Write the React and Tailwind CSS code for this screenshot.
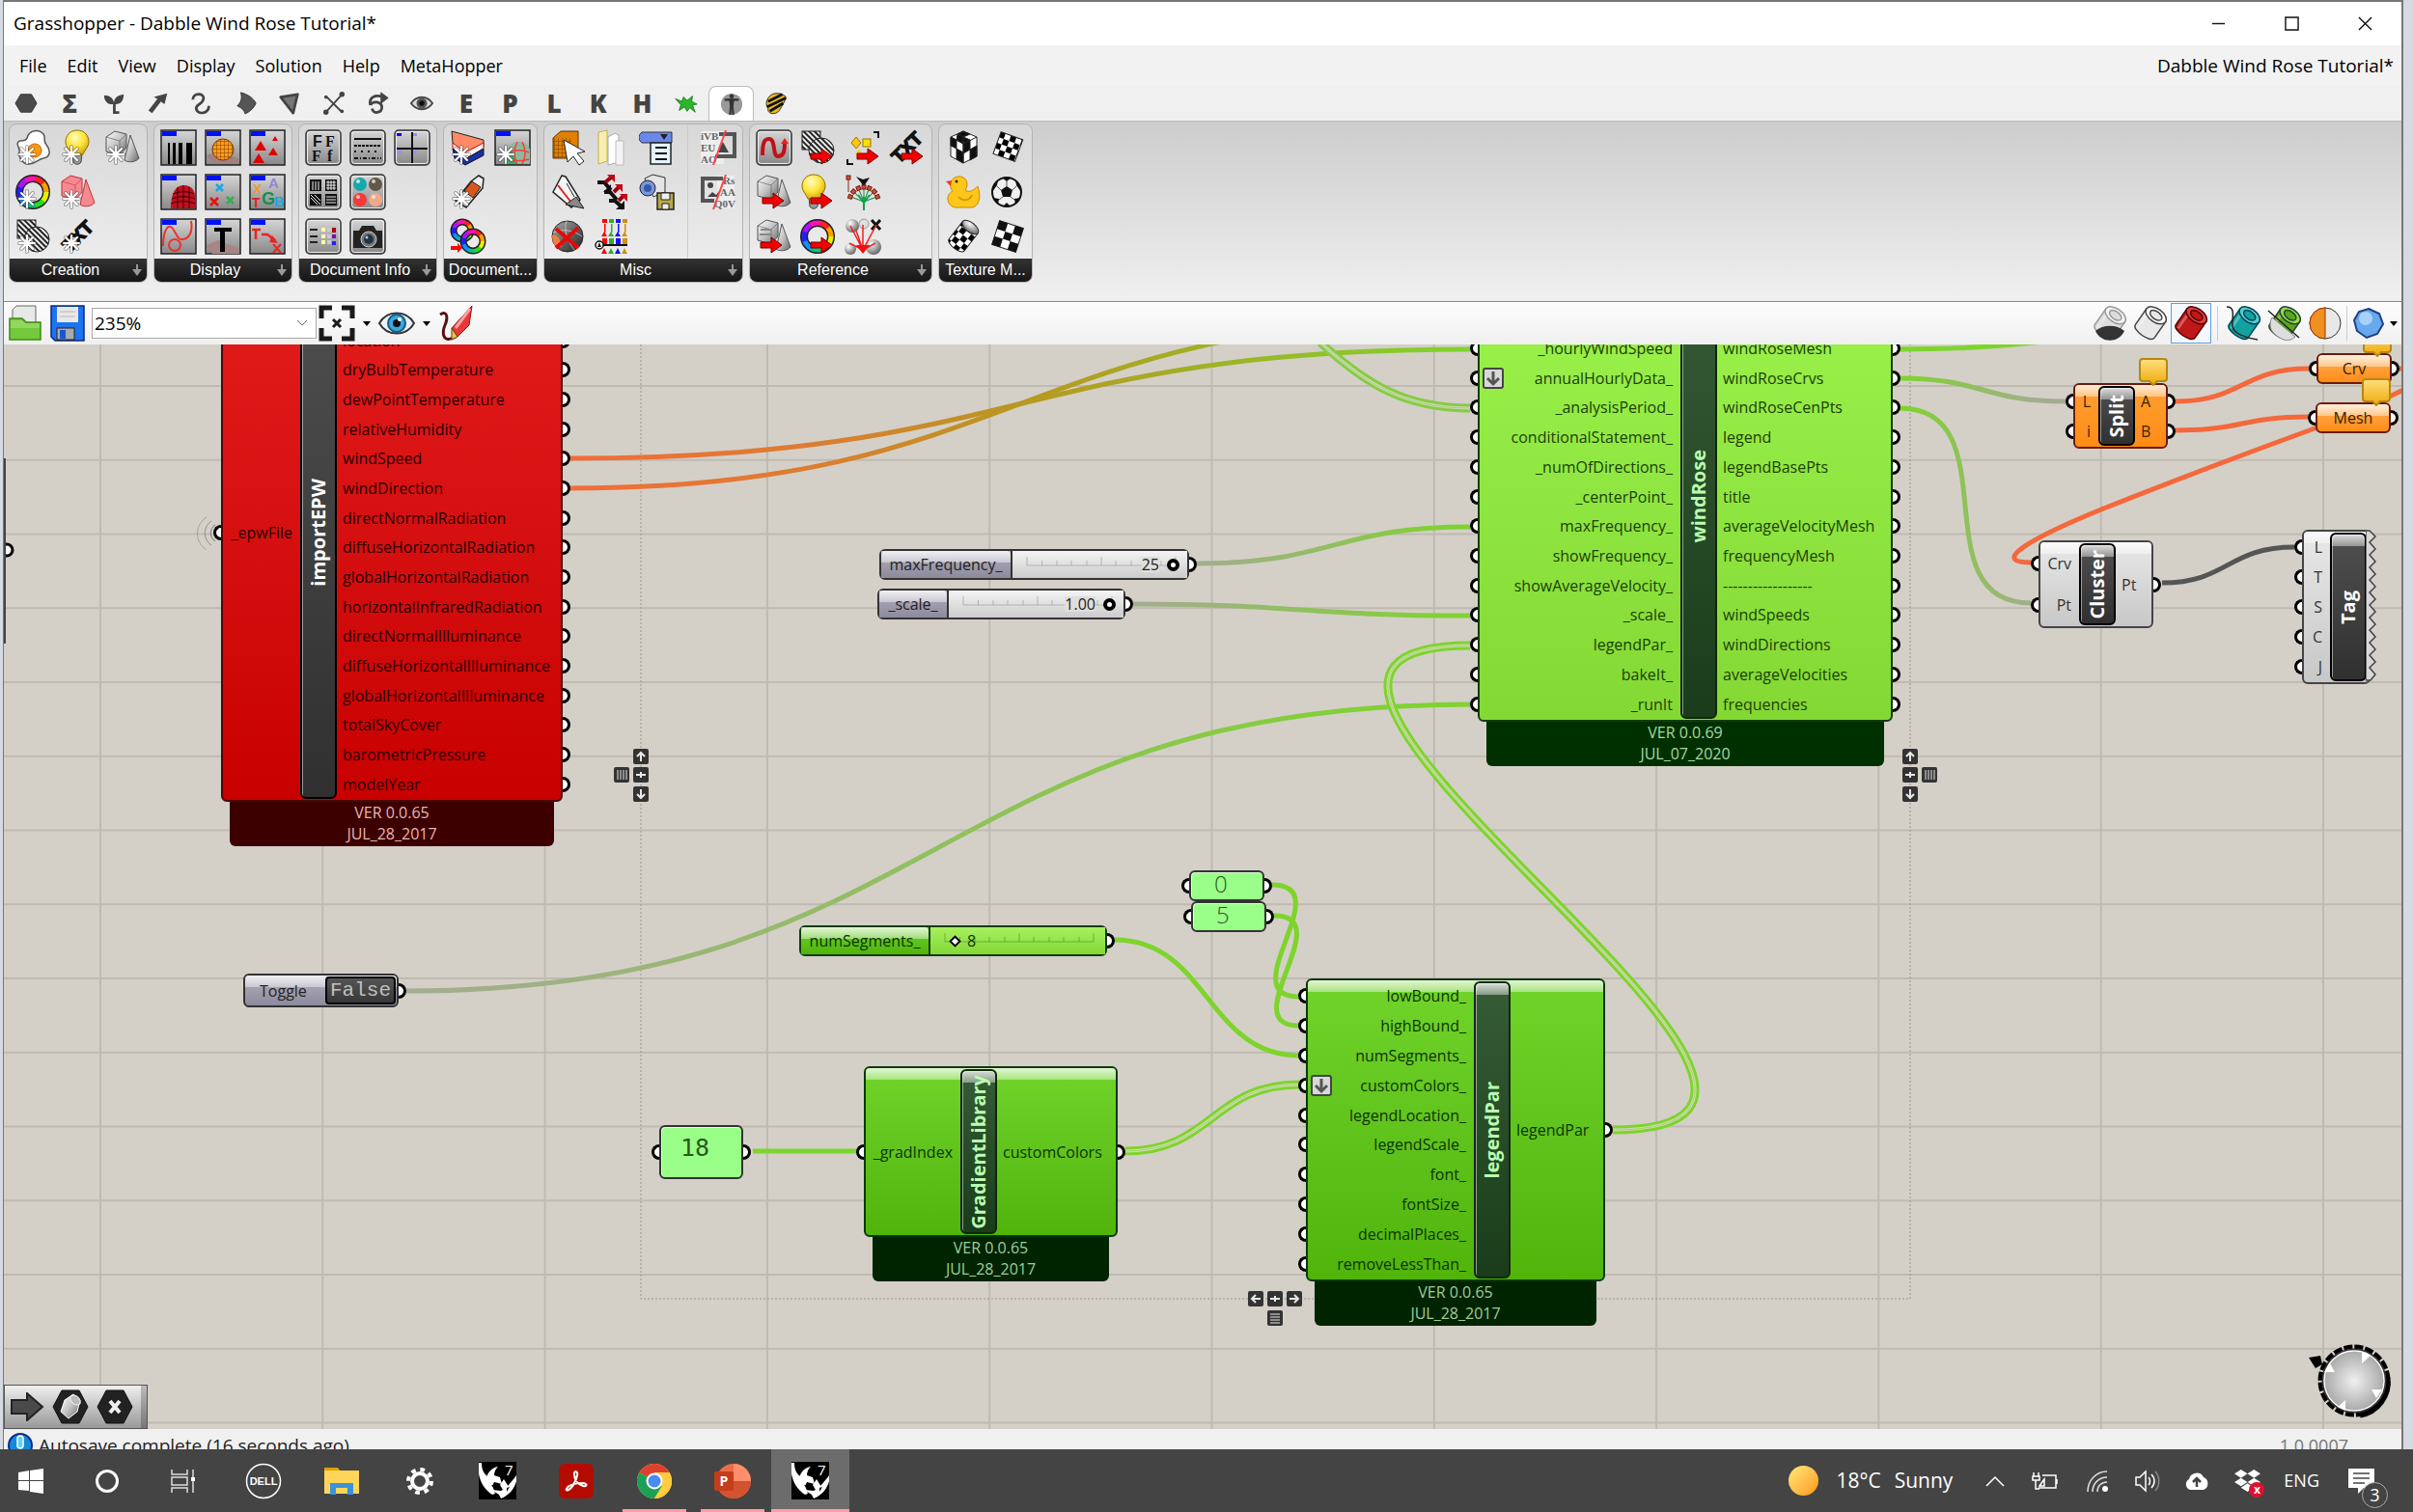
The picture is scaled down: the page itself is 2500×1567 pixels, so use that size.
import { useState } from "react";
import { FaDropbox } from "react-icons/fa";

const UI = "font-['Open_Sans','Noto_Sans',sans-serif]";

/* ---------- shared drawing bits ---------- */

function SharedDefs() {
  return (
    <svg width="0" height="0" className="absolute" aria-hidden="true">
      <defs>
        <linearGradient id="metal" x1="0" y1="0" x2="1" y2="1">
          <stop offset="0" stopColor="#ffffff" />
          <stop offset="0.5" stopColor="#c4c4c4" />
          <stop offset="1" stopColor="#666666" />
        </linearGradient>
        <linearGradient id="tile" x1="0" y1="0" x2="0" y2="1">
          <stop offset="0" stopColor="#d6d6d6" />
          <stop offset="1" stopColor="#888888" />
        </linearGradient>
        <linearGradient id="dark" x1="0" y1="0" x2="1" y2="1">
          <stop offset="0" stopColor="#aaaaaa" />
          <stop offset="1" stopColor="#222222" />
        </linearGradient>
        <radialGradient id="bulb" cx="0.4" cy="0.3" r="0.8">
          <stop offset="0" stopColor="#fffbc0" />
          <stop offset="0.5" stopColor="#ffe53b" />
          <stop offset="1" stopColor="#c99a00" />
        </radialGradient>
        <radialGradient id="ball" cx="0.35" cy="0.3" r="0.8">
          <stop offset="0" stopColor="#ffffff" />
          <stop offset="1" stopColor="#555555" />
        </radialGradient>
        <pattern id="hatch" width="4" height="4" patternUnits="userSpaceOnUse" patternTransform="rotate(-45)">
          <rect width="4" height="4" fill="#eeeeee" />
          <rect width="2" height="4" fill="#222222" />
        </pattern>
        <pattern id="checker" width="12" height="12" patternUnits="userSpaceOnUse">
          <rect width="12" height="12" fill="#ffffff" />
          <rect width="6" height="6" fill="#000000" />
          <rect x="6" y="6" width="6" height="6" fill="#000000" />
        </pattern>
        <pattern id="mesh" width="4" height="4" patternUnits="userSpaceOnUse">
          <path d="M0 0h4M0 0v4" stroke="#7a3c00" strokeWidth="1" />
        </pattern>
      </defs>
    </svg>
  );
}

const Spark = () => (
  <g fill="none" strokeLinecap="round">
    <path d="M12 18v17M4 26h16M6 20l12 12M18 20L6 32" stroke="#444" strokeWidth="4" opacity="0.45" />
    <path d="M12 18v17M4 26h16M6 20l12 12M18 20L6 32" stroke="#fff" strokeWidth="2" />
  </g>
);

const RedArrow = ({ x = 0 }) => (
  <path transform={`translate(${x} 0)`} d="M11 25h11v-5l11 8-11 8v-5H11z" fill="#f50000" stroke="#700" />
);

const Tile = ({ children }) => (
  <g>
    <rect x="1" y="1" width="36" height="36" fill="url(#tile)" stroke="#222" strokeWidth="1.5" />
    {children}
    <rect x="2" y="2" width="15" height="5" fill="#0010ff" />
  </g>
);

const SoftTile = ({ children }) => (
  <g>
    <rect x="1" y="1" width="36" height="36" rx="4" fill="url(#tile)" stroke="#333" strokeWidth="1.5" />
    <rect x="2.5" y="2.5" width="33" height="33" rx="3" fill="none" stroke="#eee" />
    {children}
  </g>
);

const Ring = ({ cx = 18, cy = 19, r = 14, w = 6 }) => {
  const colors = ["#ff2020", "#ffa000", "#e8f000", "#20e020", "#10c080", "#1090ff", "#2020ff", "#b010ff", "#ff10b0"];
  const c = 2 * Math.PI * r;
  const seg = c / colors.length;
  return (
    <g fill="none">
      <circle cx={cx} cy={cy} r={r} stroke="#222" strokeWidth={w + 2} />
      {colors.map((color, i) => (
        <circle
          key={color}
          cx={cx}
          cy={cy}
          r={r}
          stroke={color}
          strokeWidth={w - 1}
          strokeDasharray={`${seg + 0.6} ${c}`}
          transform={`rotate(${i * 40 - 80} ${cx} ${cy})`}
        />
      ))}
    </g>
  );
};

const Solids = ({ tint = "url(#metal)", edge = "#555" }) => (
  <g stroke={edge} strokeLinejoin="round">
    <path d="M27 6l9 24c-3 4-11 5-15 2z" fill={tint} />
    <path d="M2 8l9-6 12 3v14l-7 8-14-4z" fill={tint} />
    <path d="M2 8l14 4 7-7M16 12v15" fill="none" opacity="0.6" />
  </g>
);

const Bulb = () => (
  <g>
    <path d="M13 24h10l-1 10c-2 3-6 3-8 0z" fill="#999" stroke="#444" />
    <path d="M18 1c8 0 12 6 12 12 0 5-4 8-6 13H12C10 21 6 18 6 13 6 7 10 1 18 1z" fill="url(#bulb)" stroke="#8a7000" />
  </g>
);

const TiltText = () => (
  <text
    x="19"
    y="25"
    transform="rotate(-45 19 19)"
    textAnchor="middle"
    fontSize="19"
    fontWeight="700"
    fontFamily="Liberation Sans"
    fill="#111"
    stroke="#111"
    strokeWidth="1.5"
  >
    TXT
  </text>
);

const Hatched = () => (
  <g stroke="#222">
    <rect x="2" y="2" width="19" height="19" fill="url(#hatch)" />
    <circle cx="22" cy="22" r="13" fill="url(#hatch)" />
  </g>
);

/* ---------- ribbon icons ---------- */

const GLYPHS = {
  egg: (
    <>
      <path d="M12 9c2-8 12-10 17-4 3 4-1 6 3 11 5 6 4 13-3 14-6 1-8 6-15 6S3 29 4 23c1-4-4-7-1-10 2-3 7 1 9-4z" fill="#fff" stroke="#555" strokeWidth="1.5" />
      <circle cx="20" cy="22" r="7" fill="#ff9a10" stroke="#d06000" />
      <Spark />
    </>
  ),
  bulbNew: (<><Bulb /><Spark /></>),
  solidsNew: (<><Solids /><Spark /></>),
  ringNew: (<><Ring /><Spark /></>),
  pinkNew: (<><Solids tint="#f48a90" edge="#c03038" /><Spark /></>),
  hatchNew: (<><Hatched /><Spark /></>),
  textNew: (<><TiltText /><Spark /></>),
  bars: (
    <Tile>
      <path d="M8 14h2v22H8zM13 14h3v22h-3zM19 14h4v22h-4zM27 14h6v22h-6z" fill="#000" />
    </Tile>
  ),
  sphere: (
    <Tile>
      <path d="M2 27l14-5 20 9v5H9z" fill="#a08080" />
      <circle cx="19" cy="21" r="11" fill="#ff9d1a" stroke="#7a3c00" />
      <circle cx="19" cy="21" r="11" fill="url(#mesh)" />
    </Tile>
  ),
  triangles: (
    <Tile>
      <path d="M12 12l6 10H6zM27 7l3 5h-6zM25 19l5 8H20zM10 25l6 10H4z" fill="#e00000" />
    </Tile>
  ),
  dome: (
    <Tile>
      <path d="M11 36c0-16 5-24 13-24 9 0 12 6 12 12v12z" fill="#c01020" />
      <path d="M13 21c8-3 16-3 22 0M12 26c8-3 16-3 24 0M11 31c8-3 17-3 25 0M18 14v22M24 12v24M30 14v22" stroke="#400" fill="none" />
    </Tile>
  ),
  crosses: (
    <Tile>
      <g strokeWidth="2.5" fill="none">
        <path d="M12 11l7 7M19 11l-7 7" stroke="#18a8f0" />
        <path d="M6 25l8 8M14 25l-8 8" stroke="#e81010" />
        <path d="M23 24l7 7M30 24l-7 7" stroke="#30b050" />
      </g>
    </Tile>
  ),
  letters: (
    <Tile>
      <g fontFamily="Liberation Sans" fontWeight="700">
        <text x="4" y="21" fontSize="14" fill="#f09a30">X</text>
        <text x="20" y="15" fontSize="15" fill="#9088d0">A</text>
        <text x="3" y="35" fontSize="14" fill="#e02020">T</text>
        <text x="13" y="32" fontSize="18" fill="#109050">G</text>
        <text x="26" y="34" fontSize="14" fill="#18a8f0">B</text>
      </g>
    </Tile>
  ),
  curve: (
    <Tile>
      <path d="M3 29C3 14 8 4 13 11s5 12 11 11 10-8 8-19" fill="none" stroke="#f03030" strokeWidth="2" />
      <circle cx="15" cy="28" r="6" fill="none" stroke="#f03030" strokeWidth="2" />
    </Tile>
  ),
  bigT: (
    <Tile>
      <path d="M2 28l12-5 22 9v5H8z" fill="#a88484" />
      <path d="M10 10h18v4h-7v21h-5V14h-6z" fill="#000" />
    </Tile>
  ),
  textLink: (
    <Tile>
      <path d="M3 12h9M7 12v10M13 17h6l8 6" stroke="#f02020" strokeWidth="2.5" fill="none" />
      <path d="M24 18l6 8-9-1z" fill="#f02020" />
      <path d="M25 27l8 9M33 27l-8 9" stroke="#f02020" strokeWidth="2" />
    </Tile>
  ),
  fonts: (
    <SoftTile>
      <g fontWeight="700" fill="#111" fontSize="16">
        <text x="8" y="18" fontFamily="Liberation Sans">F</text>
        <text x="21" y="18" fontFamily="Liberation Serif">F</text>
        <text x="7" y="33" fontFamily="Liberation Serif">F</text>
        <text x="23" y="33" fontFamily="Liberation Serif">f</text>
      </g>
    </SoftTile>
  ),
  lines: (
    <SoftTile>
      <g stroke="#111" strokeWidth="2">
        <path d="M5 10h28" />
        <path d="M5 17h28" strokeDasharray="3 1" />
        <path d="M5 23h28" strokeDasharray="2 5" />
        <path d="M5 30h28" strokeDasharray="4 2 1 2" />
      </g>
    </SoftTile>
  ),
  axes: (
    <SoftTile>
      <path d="M19 3v32M3 20h32" stroke="#111" strokeWidth="2" />
      <path d="M3 4h5v3H3z" fill="#00f" />
      <path d="M20 4h4v3h-4zM3 22h5v3H3zM20 22h4v3h-4z" fill="#9090ff" />
    </SoftTile>
  ),
  patterns: (
    <SoftTile>
      <path d="M5 6h12v12H5zM21 6h12v12H21zM5 21h12v12H5zM21 21h12v12H21z" fill="#111" />
      <path d="M8 8v9M11 8v9M14 8v9M22 9h10M22 12h10M22 15h10M24 7v10M27 7v10M30 7v10M22 24h10M22 27h10M22 30h10M6 25l7 7M6 22l10 10M10 22l6 6" stroke="#eee" />
    </SoftTile>
  ),
  materials: (
    <SoftTile>
      <circle cx="11" cy="11" r="7" fill="#18a8a8" /><circle cx="27" cy="11" r="7" fill="#625848" />
      <circle cx="11" cy="27" r="7" fill="#f83838" /><circle cx="27" cy="27" r="7" fill="#f0a888" />
      <g fill="#fff" opacity="0.7"><circle cx="9" cy="8" r="2" /><circle cx="25" cy="8" r="2" /><circle cx="9" cy="24" r="2" /><circle cx="25" cy="24" r="2" /></g>
    </SoftTile>
  ),
  layers: (
    <SoftTile>
      <path d="M5 12h8M5 19h8M5 25h8" stroke="#222" strokeWidth="2" />
      <path d="M17 10h4v4h-4zM17 17h4v4h-4zM17 23h4v4h-4z" fill="#ffffb0" />
      <path d="M23 10h4v4h-4zM23 17h4v4h-4zM23 23h4v4h-4z" fill="#ccc" />
      <path d="M28 10h4v5h-4z" fill="#b00010" /><path d="M28 17h4v4h-4z" fill="#7010c0" /><path d="M28 24h4v4h-4z" fill="#2020ff" />
    </SoftTile>
  ),
  camera: (
    <SoftTile>
      <path d="M4 13h6l3-5h12l3 5h6v18H4z" fill="#222" />
      <circle cx="20" cy="22" r="8" fill="#777" stroke="#ccc" /><circle cx="20" cy="22" r="5" fill="#234" /><circle cx="18" cy="20" r="1.500" fill="#9cf" />
    </SoftTile>
  ),
  wedge: (
    <>
      <path d="M2 2l33 9v7L16 28 3 14z" fill="#ff8a68" stroke="#222" />
      <path d="M3 14l13 10 19-10v6L16 31 3 20z" fill="#f4f4f4" stroke="#c00" />
      <path d="M3 20l13 11 19-11v7L16 37 5 30z" fill="#1830a0" stroke="#112" />
      <Spark />
    </>
  ),
  globe: (
    <Tile>
      <path d="M12 36c-2-16 5-24 14-23 6 0 10 4 11 8v15z" fill="#8fb89a" />
      <path d="M12 36c-1-9 1-14 5-18l6 18z" fill="#28b070" />
      <path d="M14 24c8-3 16-3 22 0M13 31c8 2 16 2 23 0M24 13c-4 8-4 16 0 23M29 13c4 8 4 16 0 23" stroke="#f04040" fill="none" strokeWidth="1.500" />
      <Spark />
    </Tile>
  ),
  pencil: (
    <>
      <path d="M30 2l5 3-1 10-17 20-11-7L22 8z" fill="#eee" stroke="#222" strokeWidth="1.500" />
      <path d="M23 8l9 6-8 11-9-7z" fill="#d8581c" stroke="#222" />
      <Spark />
    </>
  ),
  rings: (
    <>
      <Ring cx={13} cy={13} r={9} w={5} /><Ring cx={24} cy={24} r={10} w={5} />
      <path d="M1 29h7v-3l5 5-5 5v-3H1z" fill="#f00" />
    </>
  ),
  pick: (
    <>
      <path d="M3 9l8-7h18v20l-7 8H3z" fill="#e08000" stroke="#5a3000" />
      <path d="M3 9h19v21H3z" fill="url(#mesh)" />
      <path d="M14 11l4 23 6-6 6 9 5-4-7-8 8-2z" fill="#fff" stroke="#222" />
    </>
  ),
  folder: (
    <>
      <path d="M4 3l9-2v32l-9 3z" fill="#f8eeb0" stroke="#c8b050" />
      <path d="M14 8l7-4 4 2v28l-11 3z" fill="#fff" stroke="#aaa" /><path d="M22 12h8v25h-8z" fill="#f4f4f4" stroke="#bbb" />
    </>
  ),
  scroll: (
    <>
      <path d="M3 3h31v11H3c-4-3-4-8 0-11z" fill="#6a88e8" stroke="#334" />
      <path d="M22 5h8l-4 6z" fill="#222" />
      <rect x="12" y="14" width="21" height="22" fill="#e4f4fc" stroke="#222" strokeWidth="1.500" />
      <path d="M17 19h12M17 25h12M17 31h12" stroke="#111" strokeWidth="2" />
    </>
  ),
  imageOut: (
    <>
      <path d="M1 2h24v34H1z" fill="#eee" />
      <g fontFamily="Liberation Serif" fontSize="11" fontWeight="700" fill="#666"><text x="1" y="11">iVB</text><text x="1" y="23">EU</text><text x="1" y="35">AO</text></g>
      <path d="M20 5h16v23H16" fill="none" stroke="#555" strokeWidth="4" />
      <path d="M24 13l6 11H18z" fill="#444" /><path d="M27 1L14 37" stroke="#f44" strokeWidth="2" />
    </>
  ),
  imageIn: (
    <>
      <path d="M18 2h18v34H18z" fill="#eee" />
      <g fontFamily="Liberation Serif" fontSize="11" fontWeight="700" fill="#666"><text x="24" y="11">Rs</text><text x="21" y="23">AA</text><text x="15" y="35">Q0V</text></g>
      <path d="M24 5H3v23h12" fill="none" stroke="#555" strokeWidth="4" />
      <circle cx="11" cy="12" r="3" fill="#444" /><path d="M8 24l5-5 4 3 3-4v6z" fill="#444" /><path d="M27 1L14 37" stroke="#f44" strokeWidth="2" />
    </>
  ),
  ruler: (
    <>
      <path d="M12 2l4 1 15 24-9 8L3 19z" fill="#f4f4f4" stroke="#222" strokeWidth="1.500" />
      <path d="M8 12l14 18" stroke="#e02020" strokeWidth="2" />
      <path d="M16 32l11-8 8 12zM25 24l-8-14" fill="#888" stroke="#222" />
    </>
  ),
  arrowsList: (
    <>
      <path d="M3 9h7l7 8M10 19h6l7 8M15 28h6l9 8" stroke="#111" strokeWidth="4" fill="none" />
      <path d="M31 28v9h-9zM17 11v8h-8z" fill="#111" />
      <path d="M11 9l6-5M20 19l5-5M25 28l5-5" stroke="#a00010" strokeWidth="4" />
      <path d="M13 1h8v8zM21 11h8v8zM26 21h8v8z" fill="#c00818" />
    </>
  ),
  cameraSave: (
    <>
      <path d="M6 5l8-4 13 3v15l-12 5z" fill="#e4e4e4" stroke="#333" />
      <circle cx="9" cy="15" r="8" fill="#7898d8" stroke="#223" /><circle cx="9" cy="15" r="4" fill="#3858a8" />
      <rect x="19" y="20" width="17" height="17" fill="#b8a848" stroke="#222" strokeWidth="1.500" /><path d="M23 20h9v7h-9zM24 31h7v6h-7z" fill="#eee" stroke="#222" />
    </>
  ),
  noSphere: (
    <>
      <circle cx="18" cy="19" r="16" fill="url(#dark)" stroke="#222" />
      <path d="M17 3c-3 8 0 20 8 30M3 15c10-4 20-3 30 4" fill="none" stroke="#eee" opacity="0.6" />
      <path d="M2 18c4-2 9 4 10 12L7 30C3 27 2 22 2 18z" fill="#f08040" />
      <path d="M6 11l23 20M29 10L6 31" stroke="#e80808" strokeWidth="4" />
    </>
  ),
  slots: (
    <>
      {[["#f00", 10], ["#3a3", 17], ["#11f", 24], ["#d09010", 31]].map(([color, x]) => (
        <g key={color} fill={color} stroke="none">
          <path d={`M${x - 2} 1h5v4h-5zM${x} 6h1.500v9H${x}zM${x - 2} 21h5v6h-5z`} />
          <path d={`M${x} 14l3 5h-6zM${x} 31l3 6h-6z`} />
        </g>
      ))}
      <path d="M4 28h30" stroke="#111" strokeWidth="2" /><circle cx="5" cy="28" r="4" fill="#fff" stroke="#111" strokeWidth="1.500" /><path d="M5 25l2 5H3z" fill="#111" />
    </>
  ),
  refCurve: (
    <SoftTile>
      <path d="M7 27c0-16 3-17 7-17 7 0 3 18 9 18 6 0 7-5 7-15" stroke="#c01018" strokeWidth="4" fill="none" />
      <path d="M26 15l4-6 4 6z" fill="#f02020" />
    </SoftTile>
  ),
  hatchRef: (<><Hatched /><RedArrow /></>),
  pointsRef: (
    <>
      <path d="M30 3h5v6M3 31v5h6" stroke="#111" strokeWidth="2" fill="none" />
      <path d="M12 8l5 6-5 6-5-6z" fill="#ffc800" stroke="#a07000" /><rect x="19" y="10" width="8" height="8" fill="#ffe000" stroke="#a07000" /><path d="M15 21l4 5h-8z" fill="#ffc800" />
      <RedArrow x={2} />
    </>
  ),
  textRef: (<><TiltText /><RedArrow x={2} /></>),
  solidsRef: (<><Solids /><RedArrow x={-4} /></>),
  bulbRef: (<><g transform="translate(-4 0)"><Bulb /></g><RedArrow /></>),
  flower: (
    <>
      <path d="M4 5v14" stroke="#a06050" strokeWidth="1.500" /><path d="M12 3l7 3 7-2-4 6-2 5-3-6z" fill="#111" />
      {[-70, -46, -22, 0, 22, 46, 70].map((a) => (
        <g key={a} transform={`rotate(${a} 20 29)`}><path d="M20 29V16" stroke="#108840" /><rect x="18" y="12" width="4" height="4" fill="#c06030" stroke="#801010" /></g>
      ))}
      <path d="M20 24v14M14 22l6 8 6-8" stroke="#10a050" strokeWidth="2" fill="none" /><rect x="2" y="2" width="4" height="4" fill="#c06030" stroke="#801010" />
    </>
  ),
  rocksRef: (<><Solids /><path d="M5 12h12M4 17h13" stroke="#888" strokeWidth="2" /><RedArrow x={-6} /></>),
  ringRef: (<><Ring /><RedArrow /></>),
  burst: (
    <>
      <circle cx="8" cy="8" r="7" fill="url(#ball)" /><circle cx="20" cy="6" r="5" fill="#ddd" stroke="#999" /><circle cx="6" cy="32" r="6" fill="url(#ball)" /><circle cx="30" cy="30" r="8" fill="url(#ball)" />
      <path d="M28 2l9 10M37 2l-9 10" stroke="#111" strokeWidth="3" />
      <path d="M19 33L6 8M19 33V7M19 33L33 7M19 33L5 26M19 33l13-7M19 33l-7-20" stroke="#f42020" strokeWidth="1.500" /><path d="M12 28l7 9 7-9z" fill="#f01010" />
    </>
  ),
  cube: (
    <g stroke="#222" strokeLinejoin="round">
      <path d="M19 2l14 6v20l-14 7-13-7V8z" fill="#fff" />
      <path d="M19 2l7 3-7 3-6-3zM12 11l7 4v-7l-6-3zM19 15l7-4-7-3zM6 8l6 3v9l-6-3zM12 20l7 4v11l-7-4zM19 15l7-4v10l-7 4zM26 21l7-4v11l-7 4z" fill="#111" />
      <path d="M6 8l13 7 14-7M19 15v20" fill="none" />
    </g>
  ),
  plane: <path transform="rotate(20 19 19)" d="M7 6h24v24H7z" fill="url(#checker)" stroke="#222" />,
  duck: (
    <>
      <path d="M10 4c6-3 13 0 13 7 0 3-2 5-1 7 5 1 8-1 12-5 4 12 1 21-6 22H11C2 34 0 22 8 18 5 15 4 8 10 4z" fill="#ffc61a" stroke="#c88a00" />
      <path d="M7 7l-6 1 5 5z" fill="#f04010" /><circle cx="12" cy="8" r="1.500" fill="#222" /><path d="M14 24c4 5 12 4 14-2" stroke="#d89800" strokeWidth="2" fill="none" />
    </>
  ),
  football: (
    <>
      <circle cx="18" cy="19" r="15" fill="#f0f0f0" stroke="#111" strokeWidth="2" />
      <path d="M18 13l6 4-2 7h-8l-2-7zM13 4l5 4 5-4zM3 19l5-7 1-5c-4 3-6 8-6 12zM33 19l-5-7-1-5c4 3 6 8 6 12zM9 32l1-6-6-1zM27 32l-1-6 6-1zM14 34h8l-4-4z" fill="#111" />
      <path d="M18 13V8M24 17l4-4M22 24l4 3M14 24l-4 3M12 17l-4-4" stroke="#555" />
    </>
  ),
  cylinder: (
    <g transform="rotate(38 19 19)">
      <path d="M9 7v23c0 6 20 6 20 0V7z" fill="url(#checker)" stroke="#222" /><ellipse cx="19" cy="7" rx="10" ry="5" fill="url(#ball)" stroke="#222" />
    </g>
  ),
  flag: (
    <g transform="rotate(18 19 19)">
      <rect x="6" y="6" width="26" height="26" fill="#fff" stroke="#222" /><path d="M6 6h9v9H6zM23 6h9v9h-9zM15 15h8v8h-8zM6 23h9v9H6zM23 23h9v9h-9z" fill="#111" />
    </g>
  ),
};

function RibbonIcon({ name }) {
  return (
    <button type="button" aria-label={name} className="flex size-[46px] items-center justify-center">
      <svg viewBox="0 0 38 38" className="size-[38px]">
        {GLYPHS[name]}
      </svg>
    </button>
  );
}

const RIBBON = [
  { label: "Creation", cols: "grid-cols-3", more: true, icons: ["egg", "bulbNew", "solidsNew", "ringNew", "pinkNew", null, "hatchNew", "textNew", null] },
  { label: "Display", cols: "grid-cols-3", more: true, icons: ["bars", "sphere", "triangles", "dome", "crosses", "letters", "curve", "bigT", "textLink"] },
  { label: "Document Info", cols: "grid-cols-3", more: true, icons: ["fonts", "lines", "axes", "patterns", "materials", null, "layers", "camera", null] },
  { label: "Document...", cols: "grid-cols-2", icons: ["wedge", "globe", "pencil", null, "rings", null] },
  {
    label: "Misc",
    cols: "grid-cols-3",
    more: true,
    icons: ["pick", "folder", "scroll", "ruler", "arrowsList", "cameraSave", "noSphere", "slots", null],
    extra: ["imageOut", "imageIn"],
  },
  { label: "Reference", cols: "grid-cols-4", more: true, icons: ["refCurve", "hatchRef", "pointsRef", "textRef", "solidsRef", "bulbRef", "flower", null, "rocksRef", "ringRef", "burst", null] },
  { label: "Texture M...", cols: "grid-cols-2", icons: ["cube", "plane", "duck", "football", "cylinder", "flag"] },
];

function RibbonGroup({ group }) {
  return (
    <section className="flex flex-col overflow-hidden rounded-lg border border-[#b4b4b4] bg-linear-to-b from-[#d8d8d8] to-[#f0f0f0]">
      <div className="flex px-[2px] pt-px">
        <div className={`grid ${group.cols} auto-rows-[46px]`}>
          {group.icons.map((name, i) => (name ? <RibbonIcon key={i} name={name} /> : <span key={i} />))}
        </div>
        {group.extra && (
          <div className="ml-2 flex flex-col border-l border-[#ccc] pl-2">
            {group.extra.map((name) => (
              <RibbonIcon key={name} name={name} />
            ))}
          </div>
        )}
      </div>
      <div className="flex h-6 items-center justify-center bg-linear-to-b from-[#333] to-[#161616] font-['Liberation_Sans',sans-serif] text-[16px] whitespace-nowrap text-white">
        <span className="flex-1 text-center">{group.label}</span>
        {group.more && (
          <svg viewBox="0 0 12 14" className="mr-1 h-3.5 w-3">
            <path d="M5 1h2v5h4l-5 7-5-7h4z" fill="#999" />
          </svg>
        )}
      </div>
    </section>
  );
}

/* ---------- category tabs ---------- */

const TABS = [
  { name: "Params", art: <path d="M7 3h12l6 10-6 10H7L1 13z" fill="#4a4a4a" stroke="#333" /> },
  { name: "Maths", letter: "Σ" },
  { name: "Sets", art: <path d="M12 25V14C7 15 2 11 2 4c6 0 10 3 11 8 1-6 5-8 11-9 0 7-3 11-9 11v8h4v3z" fill="#444" /> },
  { name: "Vector", art: <path d="M23 2l-3 12-4-3L6 24l-4-3L12 8 8 6z" fill="#444" /> },
  { name: "Curve", art: <path d="M3 9c0-8 13-8 12-1S5 14 7 20s14 5 14-4" fill="none" stroke="#444" strokeWidth="3" /> },
  { name: "Surface", art: <path d="M7 1c8 2 14 6 17 12-2 5-6 9-12 12-1-4-4-7-9-9 4-4 6-8 4-15z" fill="#555" stroke="#333" /> },
  { name: "Mesh", art: <path d="M3 6l19-3-5 21z" fill="#777" stroke="#444" strokeWidth="3" strokeLinejoin="round" /> },
  {
    name: "Intersect",
    art: (
      <g fill="#444" stroke="#444" strokeWidth="2">
        <path d="M4 5l18 18M22 3L4 23" />
        <circle cx="22" cy="3" r="2" /><circle cx="4" cy="23" r="2" /><circle cx="22" cy="22" r="1" /><circle cx="4" cy="6" r="1" />
      </g>
    ),
  },
  {
    name: "Transform",
    art: (
      <g fill="none" stroke="#444" strokeWidth="3">
        <path d="M4 15C2 6 10 3 18 6" /><path d="M16 1l8 6-8 6z" fill="#444" strokeWidth="1" />
        <path d="M4 15c3-5 12-4 13 2 0 7-10 9-11 2" />
      </g>
    ),
  },
  {
    name: "Preview",
    art: (
      <g>
        <path d="M1 13C7 4 19 4 25 13 19 22 7 22 1 13z" fill="#ddd" stroke="#444" strokeWidth="2" />
        <circle cx="13" cy="13" r="6" fill="#555" /><circle cx="13" cy="13" r="3" fill="#111" />
      </g>
    ),
  },
  { name: "E", letter: "E" },
  { name: "P", letter: "P" },
  { name: "L", letter: "L" },
  { name: "K", letter: "K" },
  { name: "H", letter: "H" },
  { name: "MetaHopper", art: <path d="M1 8l7 3 2-5 4 4 6-5-1 6 6 3-5 1 3 8-6-5-3 4-3-5-6 4 2-6z" fill="#2db52d" stroke="#188018" /> },
  {
    name: "Human",
    art: (
      <g>
        <circle cx="13" cy="13" r="12" fill="#999" />
        <path d="M5 8h16" stroke="#333" strokeWidth="2.500" /><path d="M10 7h6l-1 8 1 10h-2.500L13 16l-.5 9H10l1-10z" fill="#333" /><circle cx="13" cy="4" r="2.500" fill="#333" />
      </g>
    ),
  },
  {
    name: "Bee",
    art: (
      <g>
        <path d="M5 6c4-6 16-5 19 0 0 4-4 9-7 15-5 6-14 4-13-2C1 14 2 10 5 6z" fill="#e8b820" stroke="#222" />
        <path d="M4 11L20 3M3 17L24 7M6 22l15-9" stroke="#111" strokeWidth="3" />
      </g>
    ),
  },
];

function CategoryTabs({ active, onSelect }) {
  return (
    <nav className="flex h-9 w-[823px] bg-[#f0f0f0]">
      {TABS.map((tab) => (
        <button
          key={tab.name}
          type="button"
          aria-label={tab.name}
          onClick={() => onSelect(tab.name)}
          className={`flex flex-1 items-center justify-center rounded-t-lg text-[26px] leading-9 font-extrabold text-[#444] ${
            tab.name === active ? "border border-b-0 border-[#bbb] bg-white" : ""
          }`}
        >
          {tab.letter ?? (
            <svg viewBox="0 0 26 26" className="size-6">
              {tab.art}
            </svg>
          )}
        </button>
      ))}
    </nav>
  );
}

/* ---------- canvas toolbar ---------- */

const Caret = () => (
  <svg viewBox="0 0 8 5" className="h-[5px] w-2">
    <path d="M0 0h8L4 5z" fill="#000" />
  </svg>
);

function ToolButton({ label, selected, children }) {
  return (
    <button
      type="button"
      aria-label={label}
      className={`flex h-[42px] w-[42px] shrink-0 items-center justify-center ${selected ? "border border-[#5a9fe0] bg-[#f4f8fc]" : ""}`}
    >
      <svg viewBox="0 0 38 38" className="size-[38px]">
        {children}
      </svg>
    </button>
  );
}

const Can = ({ body, top, stroke = "#333" }) => (
  <g transform="rotate(35 19 19)" stroke={stroke} strokeWidth="1.500">
    <path d="M7 9v20c0 7 24 7 24 0V9z" fill={body} />
    <path d="M11 15v16" stroke="#fff" strokeWidth="3" opacity="0.3" />
    <ellipse cx="19" cy="9" rx="12" ry="7" fill={top} />
    <ellipse cx="19" cy="9" rx="7" ry="4" fill={body} />
  </g>
);

function CanvasToolbar() {
  const [zoom, setZoom] = useState("235%");
  return (
    <div className="flex h-[45px] shrink-0 items-center border-t border-[#888] bg-linear-to-b from-[#fdfdfd] to-[#f0f0f0] pl-[3px]">
      <ToolButton label="Open">
        <path d="M4 17V5l4-4h20v18z" fill="#e8e8e8" stroke="#666" />
        <path d="M1 14h13l4 4h15v18H1z" fill="#74c83c" stroke="#3c8a10" strokeWidth="1.500" />
        <path d="M2 24h30v-5H17l-4-3H2z" fill="#a8e078" opacity="0.6" />
      </ToolButton>
      <ToolButton label="Save">
        <path d="M2 1h34v36H6l-4-4z" fill="#1c74f0" stroke="#0a2a78" strokeWidth="1.500" />
        <rect x="8" y="2" width="22" height="16" fill="#e8e8e8" /><path d="M11 7h16M11 12h16" stroke="#b8b8b8" />
        <rect x="8" y="24" width="18" height="12" fill="#aaa" stroke="#222" /><rect x="11" y="26" width="6" height="9" fill="#1458d8" />
      </ToolButton>
      <div className="ml-1 flex h-8 w-[233px] items-center border border-[#aaa] bg-white">
        <select
          aria-label="Zoom level"
          value={zoom}
          onChange={(e) => setZoom(e.target.value)}
          className="h-full flex-1 appearance-none bg-transparent pl-[2px] text-[19px] text-black"
        >
          <option>235%</option>
          <option>100%</option>
        </select>
        <svg viewBox="0 0 12 8" className="mr-2 h-2 w-3">
          <path d="M1 1l5 5 5-5" fill="none" stroke="#666" />
        </svg>
      </div>
      <ToolButton label="Zoom extents">
        <path d="M3 14V3h11M24 3h11v11M35 24v11H24M14 35H3V24" fill="none" stroke="#1a1a1a" strokeWidth="5" />
        <path d="M15 15l8 8M23 15l-8 8" stroke="#1a1a1a" strokeWidth="3" />
      </ToolButton>
      <span className="px-[6px]"><Caret /></span>
      <ToolButton label="Named views">
        <path d="M1 19C9 5 29 5 37 19 29 33 9 33 1 19z" fill="#e8f4fa" stroke="#333" strokeWidth="2" />
        <circle cx="19" cy="19" r="9" fill="#3aa8e0" stroke="#185880" strokeWidth="2" /><circle cx="19" cy="19" r="4" fill="#111" /><circle cx="22" cy="15" r="2" fill="#fff" />
      </ToolButton>
      <span className="px-[6px]"><Caret /></span>
      <ToolButton label="Sketch">
        <path d="M2 10c8-5 8 4 5 11s-3 20 11 12" fill="none" stroke="#5a1010" strokeWidth="3" />
        <path d="M35 1l-3 20-12 12-6-9z" fill="#e83838" stroke="#901818" /><path d="M33 4L18 24" stroke="#f8a0a0" strokeWidth="3" /><path d="M14 24l6 9-6 3z" fill="#f0c050" stroke="#604010" />
      </ToolButton>

      <div className="ml-auto flex items-center">
        <ToolButton label="No preview">
          <Can body="#ddd" top="#f4f4f4" stroke="#999" />
          <path d="M4 27c8-7 22-7 30 0-6 13-24 13-30 0z" fill="#333" />
        </ToolButton>
        <ToolButton label="Wireframe preview">
          <Can body="#e8e8e8" top="#ffffff" stroke="#444" />
        </ToolButton>
        <ToolButton label="Shaded preview" selected>
          <Can body="#c01818" top="#e04040" stroke="#500" />
        </ToolButton>
        <span className="mx-[6px] h-9 w-px bg-[#ccc]" />
        <ToolButton label="Selected only">
          <Can body="#12a0a0" top="#58d0d0" stroke="#045" />
          <path d="M1 2c10 0 5 12 6 20s14 12 26 14" fill="none" stroke="#222" strokeWidth="1.500" />
        </ToolButton>
        <ToolButton label="Document preview">
          <Can body="#58a818" top="#98d848" stroke="#243" />
          <path d="M6 13l24 20c-4 4-10 5-16 1C6 30 1 22 6 13z" fill="#ddd" stroke="#888" /><path d="M2 6l32 28" stroke="#222" strokeWidth="1.500" />
        </ToolButton>
        <ToolButton label="Preview mesh quality">
          <circle cx="19" cy="19" r="16" fill="#e8e8e8" stroke="#333" /><path d="M19 3a16 16 0 000 32z" fill="#f09020" stroke="#a03000" />
        </ToolButton>
        <span className="mx-px h-9 w-px bg-[#ccc]" />
        <ToolButton label="Preview settings">
          <path d="M19 4l11 5 4 11-6 10-11 4-10-7L4 16 9 7z" fill="#68a8f0" stroke="#204080" strokeWidth="2" />
          <circle cx="16" cy="14" r="7" fill="#b8dcfc" opacity="0.8" />
        </ToolButton>
        <span className="pr-1 pl-px"><Caret /></span>
      </div>
    </div>
  );
}

/* ---------- graph nodes ---------- */

const THEMES = {
  red: {
    body: "border-[#4a0808] bg-linear-to-b from-[#e41c1c] to-[#c80000] text-[#280000]",
    bar: "border-black bg-linear-to-b from-[#505050] to-[#303030] text-white",
    foot: "bg-[#3c0000] text-[#e8b4b4]",
  },
  lime: {
    body: "border-[#143c10] bg-linear-to-b from-[#9cf44c] to-[#84d834] text-[#1c4008]",
    bar: "border-[#0c280c] bg-linear-to-b from-[#365c36] to-[#1a3c1a] text-[#b8ffb0]",
    foot: "bg-[#003000] text-[#a8d8a0]",
  },
  green: {
    body: "border-[#0c380c] bg-linear-to-b from-[#70d42a] to-[#50b40a] text-[#0c3400]",
    bar: "border-[#0c280c] bg-linear-to-b from-[#365c36] to-[#1a3c1a] text-[#b8ffb0]",
    foot: "bg-[#002400] text-[#a0cc9c]",
  },
  orange: {
    body: "border-[#6a1c10] bg-linear-to-b from-[#ffa030] to-[#ff8c14] text-[#402000]",
    bar: "border-black bg-linear-to-b from-[#505050] to-[#303030] text-white",
  },
  grey: {
    body: "border-[#444] bg-linear-to-b from-[#e8e8e8] to-[#c8c8c8] text-[#333]",
    bar: "border-black bg-linear-to-b from-[#505050] to-[#303030] text-white",
  },
};

const Port = ({ side }) => (
  <span
    className={
      side === "in"
        ? "absolute top-1/2 -left-[10px] h-4 w-2 -translate-y-1/2 rounded-l-full border-[3px] border-r-0 border-black bg-white"
        : "absolute top-1/2 -right-[10px] h-4 w-2 -translate-y-1/2 rounded-r-full border-[3px] border-l-0 border-black bg-white"
    }
  />
);

const Gloss = () => <span className="absolute inset-x-0 top-0 h-3 rounded-t-sm bg-linear-to-b from-white/80 to-white/40" />;

function GraphNode({ pos, size, theme, title, inputs, outputs, inWidth, foot, gloss, graft }) {
  const t = THEMES[theme];
  return (
    <article className={`absolute ${pos}`}>
      <div className={`relative flex rounded-md border-2 py-px ${size} ${t.body}`}>
        {gloss && <Gloss />}
        <ul className={`flex shrink-0 flex-col ${inWidth}`}>
          {inputs.map((label, i) => (
            <li key={i} className="relative flex flex-1 items-center justify-end pr-2 leading-none">
              <Port side="in" />
              {label === graft && (
                <svg viewBox="0 0 22 22" className="absolute left-[3px] size-[22px]">
                  <rect x="1" y="1" width="20" height="20" rx="2" fill="#d8d8d8" stroke="#444" strokeWidth="2" />
                  <path d="M11 4v12M5 11l6 6 6-6" fill="none" stroke="#555" strokeWidth="3" />
                </svg>
              )}
              {label}
            </li>
          ))}
        </ul>
        <h3
          className={`relative flex w-[38px] shrink-0 items-center justify-center overflow-hidden rounded-md border-2 text-[20px] leading-none font-bold shadow-[inset_1px_1px_0_#ffffff80] ${t.bar}`}
        >
          {gloss && <Gloss />}
          <span className="rotate-180 whitespace-nowrap [writing-mode:vertical-rl]">{title}</span>
        </h3>
        <ul className="flex flex-1 flex-col">
          {outputs.map((label, i) => (
            <li key={i} className="relative flex flex-1 items-center pl-[6px] leading-none whitespace-nowrap">
              {label}
              <Port side="out" />
            </li>
          ))}
        </ul>
      </div>
      {foot && (
        <p className={`mx-[9px] h-[46px] rounded-b-md text-center leading-[22px] ${t.foot}`}>
          {foot[0]}
          <br />
          {foot[1]}
        </p>
      )}
    </article>
  );
}

function NumberPanel({ pos, size, value, textSize }) {
  return (
    <div className={`absolute flex items-center rounded-md border-2 border-[#333] bg-[#9aff88] text-[#285820] shadow-[inset_1px_1px_0_#e0ffd8] ${pos} ${size} ${textSize}`}>
      <Port side="in" />
      {value}
      <Port side="out" />
    </div>
  );
}

const Ticks = ({ color }) => (
  <svg viewBox="0 0 156 10" className="absolute top-[6px] left-[14px] h-[10px] w-[156px]">
    <path
      d="M1 0v9h154V0M16.500 4v5M32 4v5M47 4v5M63 4v5M78 0v9M93 4v5M109 4v5M124 4v5M140 4v5"
      fill="none"
      stroke={color}
      strokeWidth="1"
      opacity="0.5"
    />
  </svg>
);

function NumberSlider({ id, pos, size, label, labelWidth, value, min, max, tone, knob }) {
  const [current, setCurrent] = useState(value);
  const green = tone === "green";
  const shown = label === "_scale_" ? Number(current).toFixed(2) : current;
  return (
    <div className={`absolute flex h-[32px] rounded-md border-2 ${pos} ${size} ${green ? "border-[#143c10] text-[#0c3400]" : "border-[#333] text-[#222]"}`}>
      <label
        htmlFor={id}
        className={`relative flex shrink-0 items-center justify-center border-r-2 leading-none ${labelWidth} ${
          green ? "border-[#143c10] bg-linear-to-b from-[#6fd22a] to-[#50b40a]" : "border-[#333] bg-linear-to-b from-[#b4b0c0] to-[#8c8a9c]"
        }`}
      >
        <Gloss />
        <span className="relative">{label}</span>
      </label>
      <div
        className={`relative flex flex-1 items-center gap-2 overflow-hidden ${
          green ? "bg-linear-to-b from-[#a8f060] to-[#84d834] pl-[21px]" : "justify-end bg-linear-to-b from-[#f4f4f4] to-[#cccccc] pr-[8px]"
        }`}
      >
        <Ticks color={green ? "#3c8010" : "#888"} />
        {knob === "diamond" && <span className="relative size-[9px] rotate-45 border-2 border-black bg-white" />}
        <span className={`relative leading-none ${green ? "" : "bg-[#dedede]"}`}>{shown}</span>
        {knob === "circle" && <span className="relative size-[13px] rounded-full border-4 border-black bg-white" />}
        <input
          id={id}
          type="range"
          min={min}
          max={max}
          value={current}
          onChange={(e) => setCurrent(e.target.value)}
          className="absolute inset-0 w-full opacity-0"
        />
      </div>
      <Port side="out" />
    </div>
  );
}

function ParamChip({ pos, label }) {
  return (
    <div className={`absolute flex h-[32px] w-[78px] items-center justify-center rounded-md border-2 border-[#6a1c10] bg-linear-to-b from-[#ffb050] to-[#ff8c14] leading-none text-[#402000] ${pos}`}>
      <Gloss />
      <Port side="in" />
      <span className="relative">{label}</span>
      <Port side="out" />
    </div>
  );
}

const Balloon = ({ pos }) => (
  <svg viewBox="0 0 30 29" className={`absolute h-[29px] w-[30px] ${pos}`}>
    <defs>
      <linearGradient id="note" x1="0" y1="0" x2="0" y2="1">
        <stop offset="0" stopColor="#ffe080" />
        <stop offset="1" stopColor="#f0a808" />
      </linearGradient>
    </defs>
    <path d="M4 1h22a3 3 0 013 3v17a3 3 0 01-3 3h-7l-4 4-4-4H4a3 3 0 01-3-3V4a3 3 0 013-3z" fill="url(#note)" stroke="#b88810" strokeWidth="2" />
  </svg>
);

const WIDGETS = [
  ["left-[652px] top-[419px]", "up"],
  ["left-[632px] top-[438px]", "cols"],
  ["left-[652px] top-[438px]", "plus"],
  ["left-[652px] top-[458px]", "down"],
  ["left-[1967px] top-[419px]", "up"],
  ["left-[1967px] top-[438px]", "plus"],
  ["left-[1987px] top-[438px]", "cols"],
  ["left-[1967px] top-[458px]", "down"],
  ["left-[1289px] top-[981px]", "left"],
  ["left-[1309px] top-[981px]", "plus"],
  ["left-[1329px] top-[981px]", "right"],
  ["left-[1309px] top-[1001px]", "rows"],
];

const WIDGET_PATHS = {
  up: "M8 13V4M4 8l4-4 4 4",
  down: "M8 3v9M4 8l4 4 4-4",
  left: "M13 8H4M8 4L4 8l4 4",
  right: "M3 8h9M8 4l4 4-4 4",
  plus: "M3 8h10M8 5v6",
  cols: "M4 3v10M7 3v10M10 3v10M13 3v10",
  rows: "M3 4h10M3 7h10M3 10h10M3 13h10",
};

/* wires live in the same coordinate space as the nodes */
const WIRES = [
  { d: "M587 118C1053 118 1053 5 1519 5", color: "url(#wireHot)" },
  { d: "M587 149C1053 149 1053 -26 1519 -26", color: "url(#wireHot)" },
  { d: "M1964 5C2030 5 2080 2 2190 -12", color: "#7ed42c" },
  { d: "M1964 35C2050 35 2050 59 2136 59", color: "url(#wireFade)" },
  { d: "M1964 66C2080 66 1984 268 2100 268", color: "url(#wireFade)" },
  { d: "M2250 59C2319 59 2319 25 2388 25", color: "#f4683c" },
  { d: "M2250 89C2319 89 2319 75 2387 75", color: "#f4683c" },
  { d: "M2482 25h8", color: "#f4683c" },
  { d: "M2488 46Q2436 72 2394 87C2309 118 2236 146 2173 171C2102 200 2056 226 2100 226", color: "#f4683c" },
  { d: "M2236 247C2304 247 2304 210 2373 210", color: "#555" },
  { d: "M1236 227C1378 227 1378 189 1519 189", color: "url(#wireGrow)" },
  { d: "M1170 269C1345 269 1345 281 1519 281", color: "url(#wireGrow)" },
  { d: "M417 670C968 670 968 373 1519 373", color: "url(#wireGrow)" },
  { d: "M1151 617C1247 617 1247 737 1342 737", color: "#7ed42c" },
  { d: "M776 836L884 836", color: "#7ed42c" },
  { d: "M1314 560C1385 560 1271 676 1342 676", color: "#7ed42c" },
  { d: "M1316 592C1385 592 1273 706 1342 706", color: "#7ed42c" },
  { d: "M1667 814C2012 814 1174 312 1519 312", color: "#7ed42c", list: true },
  { d: "M1162 836C1252 836 1252 767 1342 767", color: "#7ed42c", list: true },
  { d: "M1364 -2C1410 40 1450 66 1519 66", color: "#86cc44", list: true },
];

function Wires() {
  return (
    <svg className="absolute inset-0 size-full" aria-hidden="true">
      <defs>
        <pattern id="grid" width="230.3" height="76.750" patternUnits="userSpaceOnUse" x="99" y="42">
          <path d="M1 0v76.750M0 1h230.3" stroke="#bfbbb3" strokeWidth="2" />
        </pattern>
        <linearGradient id="wireHot" gradientUnits="userSpaceOnUse" x1="587" y1="0" x2="1519" y2="0">
          <stop offset="0" stopColor="#f46c38" />
          <stop offset="0.3" stopColor="#d88030" />
          <stop offset="0.5" stopColor="#b89820" />
          <stop offset="1" stopColor="#7ed42c" />
        </linearGradient>
        <linearGradient id="wireFade" gradientUnits="userSpaceOnUse" x1="1964" y1="0" x2="2110" y2="0">
          <stop offset="0" stopColor="#7ed42c" />
          <stop offset="1" stopColor="#a4ac90" />
        </linearGradient>
        <linearGradient id="wireGrow">
          <stop offset="0" stopColor="#a4ac90" />
          <stop offset="1" stopColor="#7ed42c" />
        </linearGradient>
      </defs>
      <rect width="100%" height="100%" fill="url(#grid)" />
      <path d="M660 0v989h1315V0" fill="none" stroke="#9a968e" strokeDasharray="2 2" />
      {WIRES.map((wire) => (
        <g key={wire.d} fill="none">
          <path d={wire.d} stroke={wire.color} strokeWidth={wire.list ? 9 : 5} />
          {wire.list && <path d={wire.d} stroke="#d4d8bc" strokeWidth="3" />}
          {wire.list && <path d={wire.d} stroke={wire.color} strokeWidth="1" opacity="0.6" />}
        </g>
      ))}
      <g fill="none" stroke="#777">
        <path d="M219 187a10 10 0 000 17" />
        <path d="M215 183a15 15 0 000 25" opacity="0.7" />
        <path d="M210 179a20 20 0 000 34" opacity="0.5" />
      </g>
      <circle cx="3" cy="213" r="6" fill="#fff" stroke="#000" strokeWidth="3" />
      <path d="M1 118v192" stroke="#444" strokeWidth="2" />
    </svg>
  );
}

function Compass() {
  return (
    <svg viewBox="0 0 92 84" className="absolute right-[5px] bottom-[7px] h-[84px] w-[92px]">
      <defs>
        <radialGradient id="dial">
          <stop offset="0" stopColor="#f0f0f0" />
          <stop offset="1" stopColor="#a8a8a8" />
        </radialGradient>
      </defs>
      <path d="M1 17l12-2 2 9-7 4z" fill="#000" />
      <circle cx="48" cy="41" r="35" fill="none" stroke="#000" strokeWidth="5" strokeDasharray="9 2" />
      <path d="M82 38a34 34 0 01-28 38" fill="none" stroke="#000" strokeWidth="7" />
      <circle cx="48" cy="41" r="32" fill="url(#dial)" stroke="#333" strokeWidth="3" />
      <circle cx="48" cy="41" r="31" fill="none" stroke="#fff" strokeWidth="1.500" />
      <path d="M56 11l9 4-9 8zM17 32l6-9 5 9zM66 50h11l-6 9zM31 68l8-7v11z" fill="#fff" />
    </svg>
  );
}

function CornerPalette() {
  return (
    <div className="absolute bottom-0 left-0 flex h-[46px] w-[149px] items-center gap-2 border border-[#555] bg-linear-to-b from-[#f0f0f0] to-[#999] pl-[5px]">
      <button type="button" aria-label="Next">
        <svg viewBox="0 0 36 30" className="h-[30px] w-9">
          <path d="M2 8h16V1l16 14-16 14v-7H2z" fill="#4a4a4a" stroke="#222" strokeWidth="2" />
        </svg>
      </button>
      <button type="button" aria-label="Geometry">
        <svg viewBox="0 0 38 38" className="size-[38px]">
          <path d="M10 2h18l9 17-9 17H10L1 19z" fill="#222" stroke="#111" />
          <path d="M13 12l9-6 7 6-3 12-9 7-8-7z" fill="url(#metal)" stroke="#fff" /><ellipse cx="24" cy="12" rx="6" ry="4" fill="#bbb" stroke="#eee" transform="rotate(40 24 12)" />
        </svg>
      </button>
      <button type="button" aria-label="Close">
        <svg viewBox="0 0 38 38" className="size-[38px]">
          <path d="M10 2h18l9 17-9 17H10L1 19z" fill="#222" stroke="#111" /><path d="M14 13l10 12M24 13L14 25" stroke="#eee" strokeWidth="4" />
        </svg>
      </button>
      <span className="ml-auto h-full w-[9px] bg-linear-to-b from-[#bbb] to-[#777]" />
    </div>
  );
}

function Canvas() {
  const [toggled, setToggled] = useState(false);
  return (
    <main className="relative min-h-0 flex-1 overflow-hidden bg-[#d4d0c8] text-[16px]">
      <Wires />
      <GraphNode
        pos="left-[225px] -top-[84px]"
        size="h-[558px] w-[354px]"
        inWidth="w-[80px]"
        theme="red"
        title="importEPW"
        inputs={["_epwFile"]}
        outputs={[
          "", "", "location", "dryBulbTemperature", "dewPointTemperature", "relativeHumidity", "windSpeed", "windDirection",
          "directNormalRadiation", "diffuseHorizontalRadiation", "globalHorizontalRadiation", "horizontalInfraredRadiation",
          "directNormalIlluminance", "diffuseHorizontalIlluminance", "globalHorizontalIlluminance", "totalSkyCover",
          "barometricPressure", "modelYear",
        ]}
        foot={["VER 0.0.65", "JUL_28_2017"]}
      />
      <GraphNode
        pos="left-[1527px] -top-[76px]"
        size="h-[467px] w-[430px]"
        inWidth="w-[208px]"
        theme="lime"
        title="windRose"
        graft="annualHourlyData_"
        inputs={[
          "", "", "_hourlyWindSpeed", "annualHourlyData_", "_analysisPeriod_", "conditionalStatement_", "_numOfDirections_",
          "_centerPoint_", "maxFrequency_", "showFrequency_", "showAverageVelocity_", "_scale_", "legendPar_", "bakeIt_", "_runIt",
        ]}
        outputs={[
          "", "", "windRoseMesh", "windRoseCrvs", "windRoseCenPts", "legend", "legendBasePts", "title", "averageVelocityMesh",
          "frequencyMesh", "------------------", "windSpeeds", "windDirections", "averageVelocities", "frequencies",
        ]}
        foot={["VER 0.0.69", "JUL_07_2020"]}
      />
      <GraphNode
        pos="left-[1349px] top-[657px]"
        size="h-[314px] w-[310px]"
        inWidth="w-[172px]"
        theme="green"
        title="legendPar"
        gloss
        graft="customColors_"
        inputs={[
          "lowBound_", "highBound_", "numSegments_", "customColors_", "legendLocation_", "legendScale_", "font_", "fontSize_",
          "decimalPlaces_", "removeLessThan_",
        ]}
        outputs={["legendPar"]}
        foot={["VER 0.0.65", "JUL_28_2017"]}
      />
      <GraphNode
        pos="left-[891px] top-[748px]"
        size="h-[177px] w-[263px]"
        inWidth="w-[98px]"
        theme="green"
        title="GradientLibrary"
        gloss
        inputs={["_gradIndex"]}
        outputs={["customColors"]}
        foot={["VER 0.0.65", "JUL_28_2017"]}
      />
      <GraphNode pos="left-[2144px] top-[40px]" size="h-[68px] w-[98px]" inWidth="w-[24px]" theme="orange" title="Split" gloss inputs={["L", "i"]} outputs={["A", "B"]} />
      <GraphNode pos="left-[2108px] top-[203px]" size="h-[91px] w-[119px]" inWidth="w-[40px]" theme="grey" title="Cluster" gloss inputs={["Crv", "Pt"]} outputs={["Pt"]} />
      <GraphNode pos="left-[2381px] top-[192px]" size="h-[160px] w-[71px]" inWidth="w-[27px]" theme="grey" title="Tag" gloss inputs={["L", "T", "S", "C", "J"]} outputs={[]} />
      <svg viewBox="0 0 12 160" className="absolute top-[192px] left-[2447px] h-[160px] w-3">
        <path d="M0 1h4l6 6-6 6 6 7-6 6 6 7-6 6 6 7-6 6 6 7-6 6 6 7-6 6 6 7-6 6 6 7-6 6 6 7-6 6 6 7-6 6 6 7-6 6 6 7-5 6H0z" fill="#d8d8d8" stroke="#444" strokeWidth="1.500" />
      </svg>
      <ParamChip pos="left-[2396px] top-[9px]" label="Crv" />
      <ParamChip pos="left-[2395px] top-[60px]" label="Mesh" />
      <Balloon pos="left-[2212px] top-[14px]" />
      <Balloon pos="left-[2444px] -top-[16px]" />
      <Balloon pos="left-[2443px] top-[35px]" />

      <NumberSlider id="maxFrequency" pos="left-[907px] top-[212px]" size="w-[321px]" label="maxFrequency_" labelWidth="w-[136px]" value={25} min={0} max={25} knob="circle" />
      <NumberSlider id="scale" pos="left-[905px] top-[253px]" size="w-[257px]" label="_scale_" labelWidth="w-[72px]" value={1} min={0} max={1} knob="circle" />
      <NumberSlider id="numSegments" pos="left-[824px] top-[602px]" size="w-[319px]" label="numSegments_" labelWidth="w-[134px]" value={8} min={0} max={100} tone="green" knob="diamond" />

      <NumberPanel pos="left-[1228px] top-[545px]" size="h-[32px] w-[78px]" value="0" textSize="pl-[24px] pb-1 text-[24px] font-light" />
      <NumberPanel pos="left-[1230px] top-[577px]" size="h-[32px] w-[78px]" value="5" textSize="pl-[24px] pb-1 text-[24px] font-light" />
      <NumberPanel pos="left-[679px] top-[809px]" size="h-[56px] w-[87px]" value="18" textSize="pb-2 pl-5 font-['DejaVu_Sans_Mono',monospace] text-[25px]" />

      <div className="absolute top-[652px] left-[248px] flex h-[35px] w-[161px] items-center rounded-md border-2 border-[#333] bg-linear-to-b from-[#b4b0c0] to-[#8c8a9c] pl-[15px] text-[#222]">
        <Gloss />
        <span id="toggle-label" className="relative flex-1">Toggle</span>
        <button
          type="button"
          aria-labelledby="toggle-label"
          aria-pressed={toggled}
          onClick={() => setToggled(!toggled)}
          className="relative mr-px h-[29px] w-[73px] rounded-sm border-2 border-black bg-linear-to-b from-[#555] to-[#383838] font-['Liberation_Mono',monospace] text-[21px] leading-none text-[#c0c0c0]"
        >
          {toggled ? "True" : "False"}
        </button>
        <Port side="out" />
      </div>

      {WIDGETS.map(([pos, kind]) => (
        <svg key={pos} viewBox="0 0 16 16" className={`absolute size-4 ${pos}`}>
          <rect width="16" height="16" rx="2" fill="#333" />
          <path d={WIDGET_PATHS[kind]} fill="none" stroke="#e8e8e8" strokeWidth={kind === "cols" || kind === "rows" ? 1 : 2} />
        </svg>
      ))}
      <Compass />
      <CornerPalette />
    </main>
  );
}

/* ---------- taskbar ---------- */

const Rhino = () => (
  <svg viewBox="0 0 39 39" className="size-[39px]">
    <rect width="39" height="39" fill="#000" />
    <path d="M0 1h3c0 7 2 11 6 14l5 9 3 9-3 1C6 29 1 20 0 12z" fill="#fff" />
    <path d="M8 16c2-6 6-10 12-11-3 3-4 6-4 9l6 2 2 7-8-2-3 6z" fill="#fff" />
    <path d="M39 14v6c-2 8-8 15-16 18l-2-4-8-5 10 1c5-2 10-8 16-16z" fill="#fff" />
    <path d="M26 18l5 8-6 3-3-5z" fill="#fff" /><path d="M13 24l5 1-2 3zM29 27l3-1-3 5z" fill="#000" />
    <text x="27" y="14" fontSize="15" fontFamily="Open Sans" fill="#fff">7</text>
  </svg>
);

const TASKS = [
  {
    name: "Start",
    cell: "w-[71px] pr-2",
    art: (
      <svg viewBox="0 0 26 26" className="size-[26px]">
        <path d="M0 4l11-2v10H0zM12 2l14-2v12H12zM0 13h11v10L0 22zM12 13h14v13l-14-2z" fill="#fff" />
      </svg>
    ),
  },
  { name: "Search", cell: "w-[79px]", art: <span className="size-6 rounded-full border-[3px] border-white" /> },
  {
    name: "Task view",
    cell: "w-[79px] mr-[3px]",
    art: (
      <svg viewBox="0 0 26 26" className="size-[26px]">
        <path d="M1 1v5h16V1M1 25v-5h16v5M1 9h16v8H1zM23 1v24" fill="none" stroke="#ddd" strokeWidth="1.500" /><path d="M21 9h4v4h-4z" fill="#fff" />
      </svg>
    ),
  },
  {
    name: "Dell",
    art: (
      <svg viewBox="0 0 38 38" className="size-[38px]">
        <circle cx="19" cy="19" r="17.500" fill="none" stroke="#fff" strokeWidth="1.500" />
        <text x="19" y="23" textAnchor="middle" fontSize="11" fontWeight="700" fontFamily="Liberation Sans" fill="#fff">DELL</text>
      </svg>
    ),
  },
  {
    name: "Explorer",
    art: (
      <svg viewBox="0 0 36 30" className="h-[30px] w-9">
        <path d="M0 1h14l3 4H0z" fill="#e0a000" /><path d="M0 4h36v24H0z" fill="#ffd55a" /><path d="M6 29V17h24v12h-6v-7H12v7z" fill="#3a94dc" />
      </svg>
    ),
  },
  {
    name: "Settings",
    art: (
      <svg viewBox="0 0 30 30" className="size-[30px]">
        <circle cx="15" cy="15" r="8" fill="none" stroke="#fff" strokeWidth="4" />
        <circle cx="15" cy="15" r="12" fill="none" stroke="#fff" strokeWidth="4" strokeDasharray="4.700 4.720" />
      </svg>
    ),
  },
  { name: "Rhino 7", art: <Rhino /> },
  {
    name: "Acrobat",
    art: (
      <svg viewBox="0 0 36 36" className="size-9">
        <rect width="36" height="36" rx="6" fill="#b30b00" />
        <path d="M8 26c2-4 9-6 17-6 6 1 3 4 0 3-6-2-9-7-9-12 0-5 4-3 3 1-1 6-6 14-9 15-2 1-3 0-2-1z" fill="none" stroke="#fff" strokeWidth="2" />
      </svg>
    ),
  },
  {
    name: "Chrome",
    running: "w-[66px]",
    art: (
      <svg viewBox="0 0 36 36" className="size-9">
        <circle cx="18" cy="18" r="18" fill="#ffcd40" />
        <path d="M18 18L2.400 9A18 18 0 0133.600 9z" fill="#e04030" /><path d="M18 18L2.400 9A18 18 0 0018 36l8-13z" fill="#1ea055" /><path d="M18 9h15.600A18 18 0 0118 36l8-13z" fill="#ffcd40" />
        <circle cx="18" cy="18" r="8.500" fill="#fff" /><circle cx="18" cy="18" r="6.500" fill="#4a8af4" />
      </svg>
    ),
  },
  {
    name: "PowerPoint",
    running: "w-[66px]",
    art: (
      <svg viewBox="0 0 38 36" className="h-9 w-[38px]">
        <circle cx="20" cy="18" r="18" fill="#ed6c47" /><path d="M20 0a18 18 0 0118 18H20z" fill="#ff8f6b" /><path d="M20 18h18a18 18 0 01-33 10z" fill="#d35230" />
        <rect y="8" width="20" height="20" rx="2" fill="#c43e1c" />
        <text x="10" y="23" textAnchor="middle" fontSize="14" fontWeight="700" fontFamily="Open Sans" fill="#fff">P</text>
      </svg>
    ),
  },
  { name: "Rhino 7 window", active: true, running: "w-full", art: <Rhino /> },
];

function Taskbar() {
  return (
    <footer className="flex h-[65px] shrink-0 items-stretch bg-[#444] text-white">
      {TASKS.map((task) => (
        <button
          key={task.name}
          type="button"
          aria-label={task.name}
          className={`relative flex shrink-0 items-center justify-center ${task.cell ?? "w-[81px]"} ${task.active ? "bg-[#6c6c6c]" : ""}`}
        >
          {task.art}
          {task.running && <span className={`absolute bottom-0 h-[3px] bg-[#ff9ca8] ${task.running}`} />}
        </button>
      ))}
      <div className="ml-auto flex items-center pr-[39px] text-[21px]">
        <span className="mr-[18px] size-[31px] rounded-full bg-linear-to-br from-[#ffe978] to-[#ff9800]" />
        <span className="mr-[14px]">18°C</span>
        <span>Sunny</span>
        <svg viewBox="0 0 20 12" className="ml-[34px] h-3 w-5"><path d="M1 11l9-9 9 9" fill="none" stroke="#fff" strokeWidth="1.500" /></svg>
        <svg viewBox="0 0 28 20" className="ml-[28px] h-5 w-7">
          <path d="M2 1v4M7 1v4M1 5h7v4H1zM4 9v9h4M11 4h14v13H7M26 8v5M13 8l-5 7h5z" fill="none" stroke="#fff" strokeWidth="1.500" />
        </svg>
        <svg viewBox="0 0 24 24" className="ml-[28px] size-6">
          <path d="M2 23C2 11 11 2 22 2M7 23c0-9 7-15 15-15M12 23c0-6 4-10 10-10" fill="none" stroke="#ddd" strokeWidth="1.500" /><circle cx="20" cy="20" r="3" fill="#fff" />
        </svg>
        <svg viewBox="0 0 28 24" className="ml-[26px] h-6 w-7">
          <path d="M2 8h4l6-6v20l-6-6H2zM15 8c2 2 2 6 0 8M18 5c4 4 4 10 0 14" fill="none" stroke="#fff" strokeWidth="1.500" /><path d="M22 2c5 6 5 14 0 20" fill="none" stroke="#888" strokeWidth="1.500" />
        </svg>
        <svg viewBox="0 0 26 20" className="ml-[24px] h-5 w-[26px]">
          <path d="M6 19a6 6 0 01-1-11 8 8 0 0115-2 7 7 0 010 13z" fill="#fff" /><path d="M13 16V8M9 11l4-4 4 4" stroke="#444" strokeWidth="2.500" fill="none" />
        </svg>
        <span className="relative ml-[26px]">
          <FaDropbox size={27} />
          <span className="absolute -right-1 -bottom-1 flex size-[16px] items-center justify-center rounded-full bg-[#e01030] text-[12px] leading-none font-bold">x</span>
        </span>
        <span className="ml-[24px] text-[18px]">ENG</span>
        <span className="relative ml-[30px]">
          <svg viewBox="0 0 28 28" className="size-7">
            <path d="M0 1h27v20H16l-6 6v-6H0z" fill="#fff" /><path d="M5 6h17M5 11h17M5 16h12" stroke="#444" strokeWidth="1.500" />
          </svg>
          <span className="absolute -right-[13px] -bottom-[14px] flex size-[27px] items-center justify-center rounded-full border border-[#aaa] bg-[#444] text-[18px]">3</span>
        </span>
      </div>
    </footer>
  );
}

/* ---------- window ---------- */

function TitleBar() {
  return (
    <header className="flex h-[47px] shrink-0 items-center border-t-2 border-[#777] bg-white pl-[10px] text-[19px] text-black">
      <h1>Grasshopper - Dabble Wind Rose Tutorial*</h1>
      <div className="ml-auto flex">
        {[
          ["Minimize", "M1 8h14"],
          ["Maximize", "M1 1h14v14H1z"],
          ["Close", "M1 1l14 14M15 1L1 15"],
        ].map(([label, d]) => (
          <button key={label} type="button" aria-label={label} className="flex w-[76px] items-center justify-center">
            <svg viewBox="0 0 16 16" className="size-[15px]">
              <path d={d} fill="none" stroke="#111" strokeWidth="1.500" />
            </svg>
          </button>
        ))}
      </div>
    </header>
  );
}

const MENU = ["File", "Edit", "View", "Display", "Solution", "Help", "MetaHopper"];

export default function App() {
  const [tab, setTab] = useState("Human");
  return (
    <div className={`flex h-screen flex-col overflow-hidden bg-[#d6dbe3] ${UI}`}>
      <SharedDefs />
      <div className="mr-[10px] ml-[3px] flex min-h-0 flex-1 flex-col border-r-2 border-l border-[#777] bg-[#f0f0f0]">
        <TitleBar />
        <div className="flex h-[42px] shrink-0 items-center bg-[#f2f2f2] pt-px pr-[8px] pl-4 text-[18px] text-black">
          <div className="flex gap-[21px]">
            {MENU.map((item) => (
              <button key={item} type="button">
                {item}
              </button>
            ))}
          </div>
          <span className="ml-auto text-[19px]">Dabble Wind Rose Tutorial*</span>
        </div>
        <CategoryTabs active={tab} onSelect={setTab} />
        <div className="flex shrink-0 items-start gap-[6px] border-t border-[#bbb] bg-linear-to-b from-[#cdcdcd] to-[#f0f0f0] px-[5px] pt-[2px] pb-[19px]">
          {RIBBON.map((group) => (
            <RibbonGroup key={group.label} group={group} />
          ))}
        </div>
        <CanvasToolbar />
        <Canvas />
        <div className="flex h-[21px] shrink-0 items-start justify-between overflow-hidden bg-[#f0f0f0] pt-[4px] pr-[55px] pl-1 text-[19px] leading-[26px]">
          <span className="flex gap-[6px] text-[#222]">
            <svg viewBox="0 0 26 26" className="size-[26px]">
              <circle cx="13" cy="13" r="12" fill="#1888d8" stroke="#0a2c90" strokeWidth="2" /><rect x="10" y="3" width="6" height="13" rx="3" fill="#60d0f8" stroke="#fff" strokeWidth="1.500" />
            </svg>
            Autosave complete (16 seconds ago)
          </span>
          <span className="text-[18px] text-[#777]">1.0.0007</span>
        </div>
      </div>
      <Taskbar />
    </div>
  );
}
